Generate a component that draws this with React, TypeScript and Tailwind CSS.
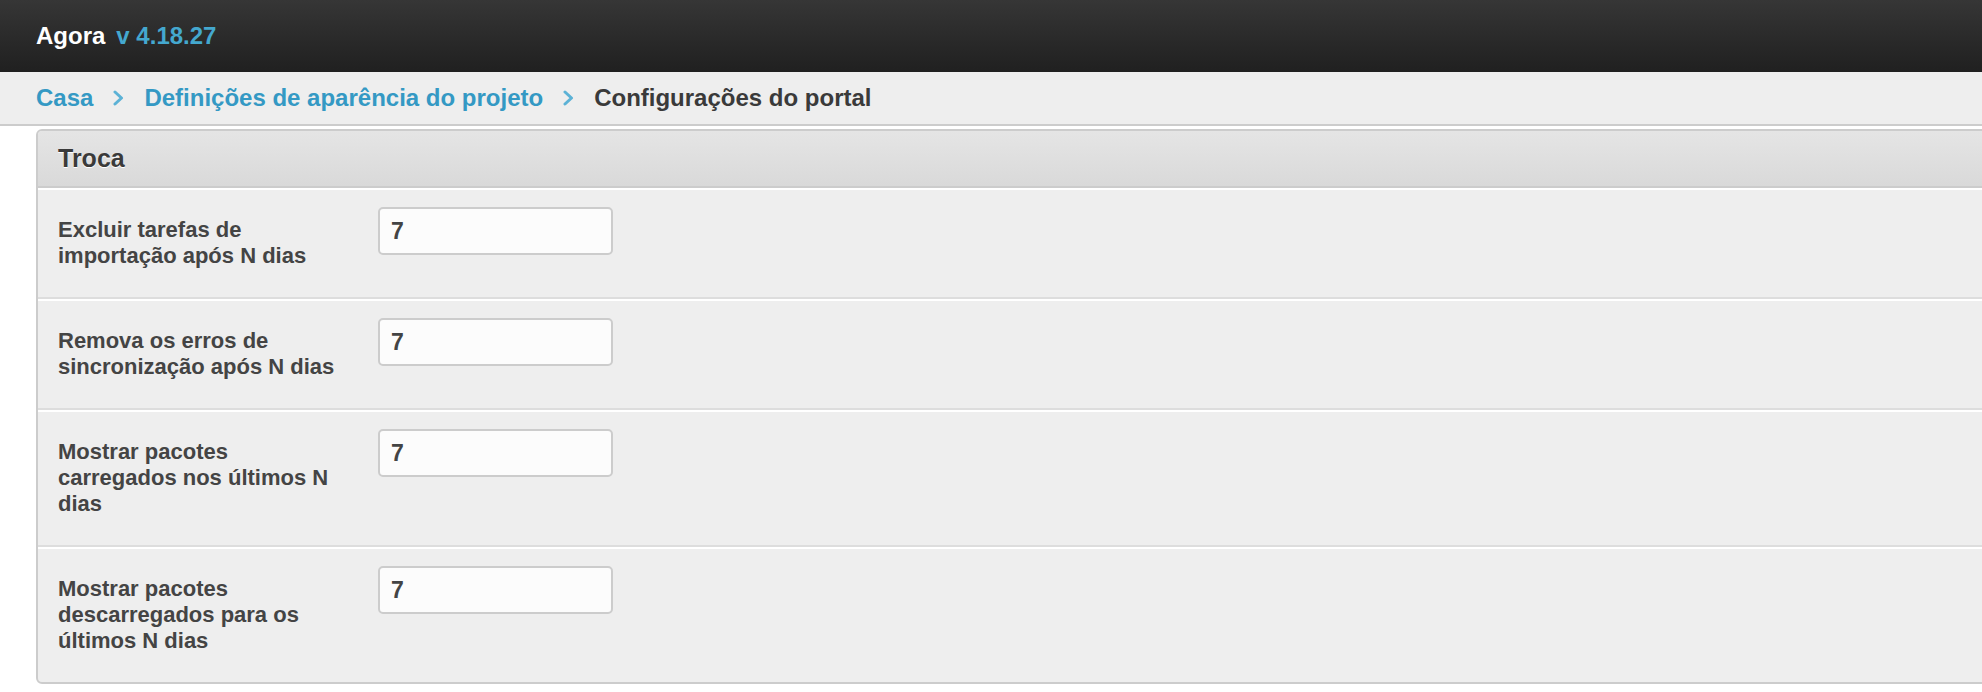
import React from "react"

const rows = [
    { label: "Excluir tarefas de importação após N dias", value: "7" },
    { label: "Remova os erros de sincronização após N dias", value: "7" },
    { label: "Mostrar pacotes carregados nos últimos N dias", value: "7" },
    { label: "Mostrar pacotes descarregados para os últimos N dias", value: "7" },
]

function Chevron() {
    return (
        <svg width="11" height="16" viewBox="0 0 11 16" className="ml-[20px] mr-[20px] shrink-0">
            <polyline points="2,2 8.5,8 2,14" fill="none" stroke="#5cb2d6" strokeWidth="3" strokeLinecap="round" strokeLinejoin="round" />
        </svg>
    )
}

export default function App() {
    return (
        <div className="w-full min-h-[692px] overflow-hidden bg-white font-['Liberation_Sans',Arial,Helvetica,sans-serif] font-bold">
            {/* Top bar */}
            <header className="h-[72px] flex items-center px-[36px] bg-gradient-to-b from-[#363636] to-[#202020]">
                <span className="text-white text-[24px]">Agora</span>
                <span className="ml-[11px] text-[#44a8cf] text-[24px]">v 4.18.27</span>
            </header>

            {/* Breadcrumb */}
            <nav className="h-[54px] flex items-center px-[36px] bg-[#eeeeee] border-b-2 border-[#cccccc] text-[24px]">
                <a className="text-[#3499c4]">Casa</a>
                <Chevron />
                <a className="text-[#3499c4]">Definições de aparência do projeto</a>
                <Chevron />
                <span className="text-[#3a3a3a]">Configurações do portal</span>
            </nav>

            {/* Panel */}
            <section className="mt-[3px] ml-[36px] mr-[-20px] border-2 border-[#cccccc] rounded-[6px] overflow-hidden bg-[#eeeeee]">
                <div className="h-[57px] flex items-center px-[20px] bg-gradient-to-b from-[#e5e5e5] to-[#d9d9d9] border-b-2 border-[#cccccc]">
                    <h2 className="text-[25px] text-[#3a3a3a] [text-shadow:0_1px_0_#ffffff]">Troca</h2>
                </div>
                {rows.map((row, i) => (
                    <div
                        key={i}
                        className={`flex items-start pl-[20px] pt-[17px] pb-[28px] border-t-2 border-white ${i < rows.length - 1 ? "border-b-2 border-b-[#dddddd]" : ""}`}
                    >
                        <label className="w-[285px] mt-[10px] text-[22px] leading-[26px] text-[#444444]">{row.label}</label>
                        <input
                            defaultValue={row.value}
                            className="ml-[35px] w-[235px] h-[48px] px-[11px] rounded-[5px] border-2 border-[#cccccc] bg-[#fcfcfc] text-[23px] font-bold text-[#444444] outline-none"
                        />
                    </div>
                ))}
            </section>
        </div>
    )
}
